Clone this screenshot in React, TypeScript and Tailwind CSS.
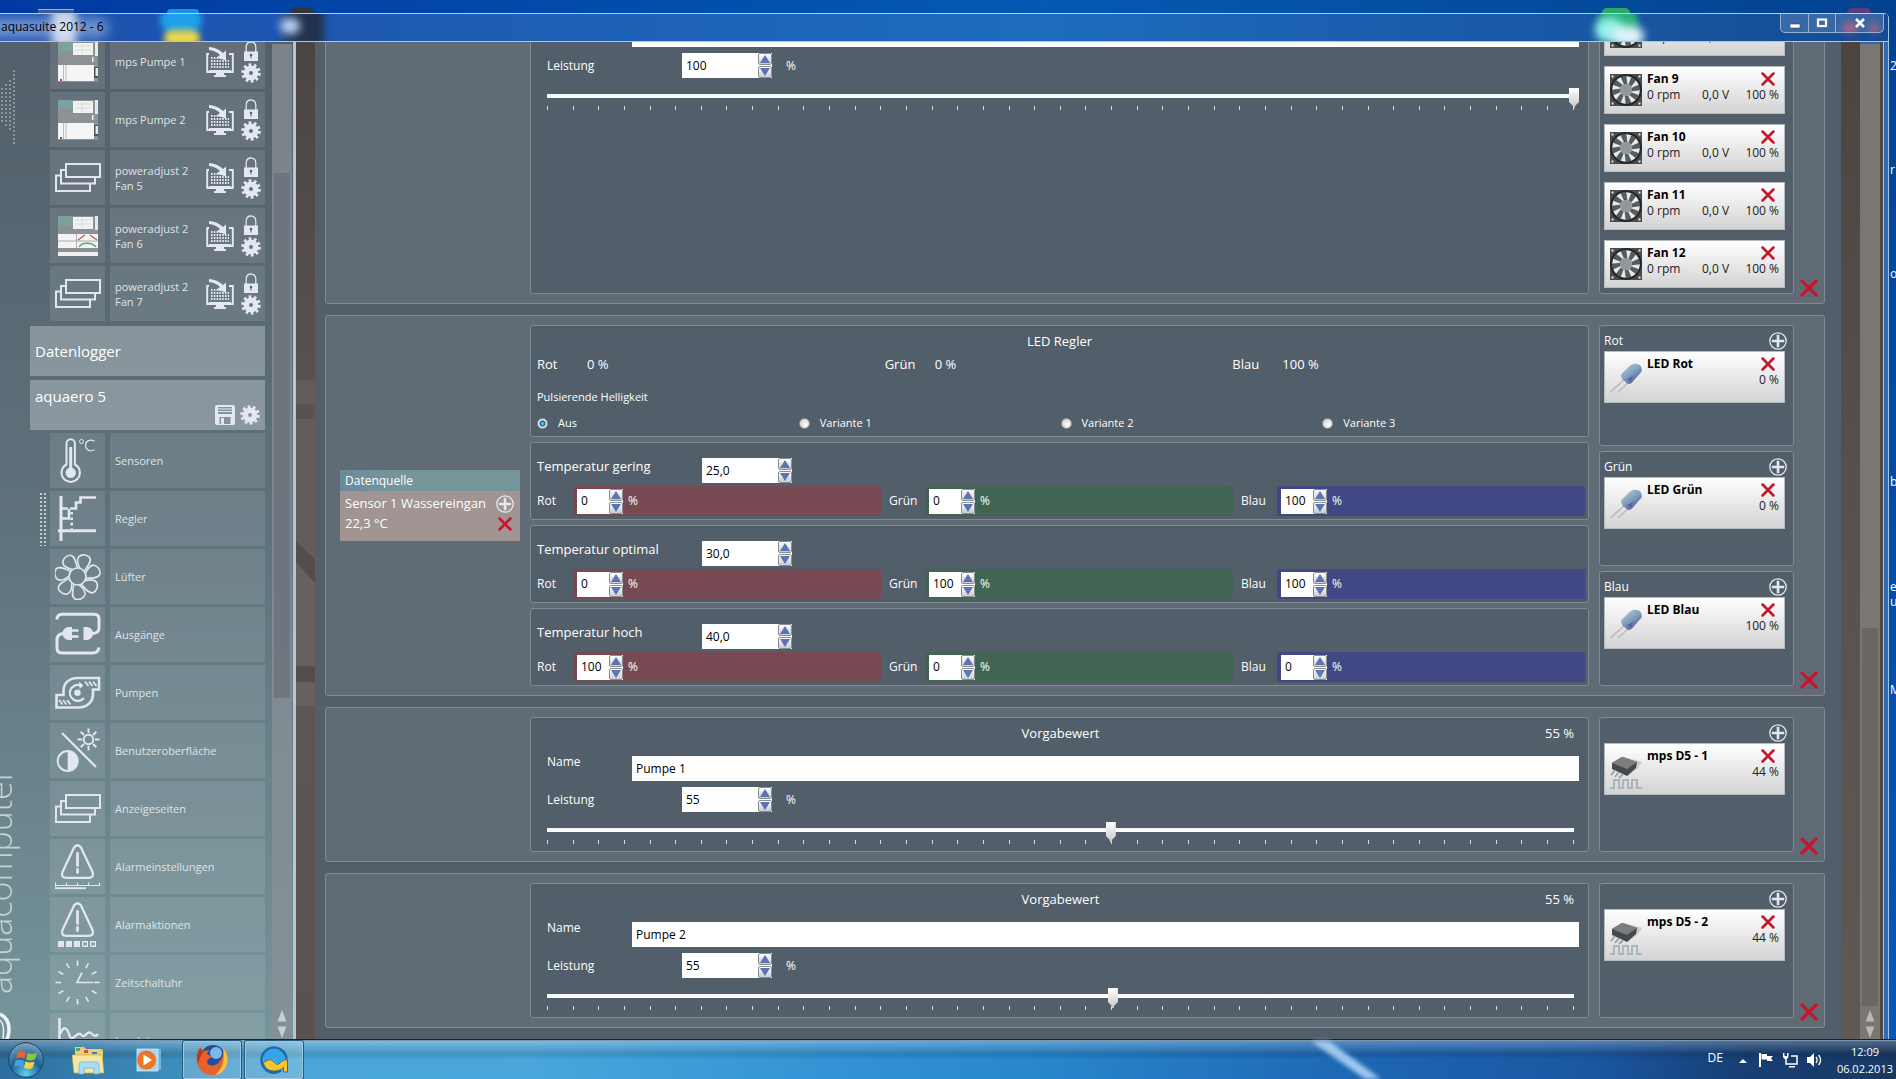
import React, { useId, useState } from "react";

/* ---------- small glyphs ---------- */

function Cross({ className }: { className: string }) {
  return (
    <svg viewBox="0 0 18 18" className={className} aria-hidden="true">
      <path d="M2 2 L16 16 M16 2 L2 16" stroke="#c3182e" strokeWidth="3.4" strokeLinecap="round" />
    </svg>
  );
}

function Plus() {
  return (
    <svg viewBox="0 0 18 18" className="size-[18px]" aria-hidden="true">
      <circle cx="9" cy="9" r="8.2" fill="none" stroke="#e3e8f2" strokeWidth="1.3" />
      <path d="M9 2.8 V15.2 M2.8 9 H15.2" stroke="#e3e8f2" strokeWidth="2.6" />
    </svg>
  );
}

function Gear() {
  return (
    <svg viewBox="0 0 20 20" className="size-5" aria-hidden="true">
      <g fill="none" stroke="#e3e8f2">
        <circle cx="10" cy="10" r="4.7" strokeWidth="5.4" />
        <circle cx="10" cy="10" r="8" strokeWidth="3.6" strokeDasharray="2.6 2.427" />
      </g>
    </svg>
  );
}

function Lock() {
  return (
    <svg viewBox="0 0 16 20" className="h-5 w-4" aria-hidden="true">
      <path d="M3.2 11 V6.2 C3.2 2.8 5.2 1 8 1 C10.800 1 12.800 2.800 12.800 6.200 V11" fill="none" stroke="#dfe5ee" strokeWidth="1.300" />
      <rect x="1" y="10.500" width="14" height="9.500" fill="#e3e8f2" />
      <circle cx="8" cy="14" r="1.300" fill="#56636d" />
      <path d="M8 14 V17.500" stroke="#56636d" />
    </svg>
  );
}

function MonitorImport() {
  return (
    <svg viewBox="0 0 28 32" className="h-8 w-7" aria-hidden="true">
      <path d="M3 8 H1.200 V26 H26.800 V8 H23" fill="none" stroke="#e3e8f2" strokeWidth="1.900" />
      <path d="M3 24.500 H25" stroke="#e3e8f2" strokeWidth="1" />
      <path d="M10 27 H18 V29 H20 V31 H8 V29 H10 Z" fill="#e3e8f2" />
      <path d="M5 12 H15 M5 15 H23 M5 18 H23 M5 21 H23" stroke="#e3e8f2" strokeWidth="1.800" strokeDasharray="1.600 1.200" />
      <path d="M3 1 C9 1.500 14 4 17 7 L20 4.500 V14.500 L10.500 11.500 L14 9 C11 5.800 7 4.300 3 4 Z" fill="#e3e8f2" />
    </svg>
  );
}

function Floppy() {
  return (
    <svg viewBox="0 0 20 20" className="size-5" aria-hidden="true">
      <rect x="0" y="0" width="20" height="20" rx="2" fill="#e3e8f2" />
      <rect x="3" y="2" width="14" height="7" fill="#879198" />
      <path d="M3 4 H17 M3 6.500 H17" stroke="#e3e8f2" />
      <rect x="4.500" y="12" width="11" height="7" fill="#879198" />
      <rect x="6" y="13" width="3" height="6" fill="#e3e8f2" />
    </svg>
  );
}

/* ---------- navigation icons, drawn on a 46 unit square ---------- */

function NavSvg({ children }: { children: React.ReactNode }) {
  return (
    <svg viewBox="0 0 46 46" className="size-[46px]" fill="none" stroke="#e1e6f0" strokeWidth="2" aria-hidden="true">
      {children}
    </svg>
  );
}

const StackIcon = () => (
  <NavSvg>
    <rect x="11" y="9" width="34" height="13" />
    <path d="M11 15 H6 V28.500 H40 V22 M6 20.500 H1 V36 H35 V29" />
  </NavSvg>
);

const ThermoIcon = () => (
  <NavSvg>
    <path d="M11.500 26.500 V5.500 A4.200 4.200 0 0 1 19.900 5.500 V26.500 A9.200 9.200 0 1 1 11.500 26.500 Z" />
    <circle cx="15.700" cy="34.700" r="5.200" fill="#e1e6f0" stroke="none" />
    <path d="M15.700 9 V34" strokeWidth="3" />
    <circle cx="26.500" cy="3.500" r="2" strokeWidth="1" />
    <path d="M39.500 3.200 C35 0.500 30.500 3 30.500 7.300 C30.500 12 35 14 39.500 11.800" strokeWidth="1.200" />
  </NavSvg>
);

const ReglerIcon = () => (
  <NavSvg>
    <path d="M6 0 V45 M3 34.700 H41" strokeWidth="3" />
    <path d="M41 1.500 H25.500 V6.500 H21 V12.500 H15 M14 13 V22.500 H6 M7 12.500 H13" strokeWidth="2.600" />
    <path d="M16.700 16 V33" strokeWidth="2.600" strokeDasharray="2.600 2.800" />
  </NavSvg>
);

const FanIcon = () => (
  <NavSvg>
    <circle cx="22.500" cy="22.500" r="8.500" strokeWidth="1.700" />
    {[0, 1, 2, 3, 4, 5, 6].map((i) => (
      <path
        key={i}
        transform={`rotate(${(i * 360) / 7} 22.500 22.500)`}
        d="M17.500 15.500 C13 14.500 8.500 12.500 7.800 9 C7.500 5 11.500 1 15.500 1.200 C20 2 20.500 8 22.500 14"
        strokeWidth="1.600"
      />
    ))}
  </NavSvg>
);

const PlugIcon = () => (
  <NavSvg>
    <path d="M2 7.500 Q2 2.200 7 2.200 H39 Q44 2.200 44 7 V16 Q44 21.500 37 21.500" strokeWidth="3" />
    <path d="M9 21.500 Q2 21.500 2 28 V36 Q2 41 7 41 H38 Q43 41 44 35.500" strokeWidth="3" />
    <path d="M17 15 V28 H14 C10 28 7.500 25 7.500 21.500 C7.500 18 10 15 14 15 Z" fill="#e1e6f0" stroke="none" />
    <path d="M28.500 15 V28 H31.500 C35.500 28 38 25 38 21.500 C38 18 35.500 15 31.500 15 Z" fill="#e1e6f0" stroke="none" />
    <path d="M17 18.500 H23.500 M17 24.500 H23.500" strokeWidth="2.400" />
  </NavSvg>
);

const PumpIcon = () => (
  <NavSvg>
    <path d="M44 8 H23 C13 8 8.500 14 8.500 21 V25 H1.500 V37.500 H23 C33 37.500 38 31 38 24 V19.500 H44 Z" strokeWidth="2.600" />
    <circle cx="22.500" cy="22.800" r="3.200" fill="#e1e6f0" stroke="none" />
    <path d="M29 28 A8 8 0 1 1 25 15.200" strokeWidth="2.200" />
    <path d="M24 11.500 L28.500 15.500 L24.500 19 Z" fill="#e1e6f0" stroke="none" />
    <path d="M30 11.500 L33.500 16 M34 11.500 L37.500 16 M38 11.500 L41.500 16 M4 30 L7.500 34.500 M8 30 L11.500 34.500 M12 30 L15.500 34.500" strokeWidth="1.900" />
  </NavSvg>
);

const DisplayIcon = () => (
  <NavSvg>
    <path d="M7 5 L41 39" strokeWidth="2.300" />
    <circle cx="33.500" cy="11.500" r="4.800" />
    <path d="M33.500 0.500 V5 M33.500 18 V22.500 M22.500 11.500 H27 M40 11.500 H44.500 M25.700 3.700 L29 7 M38 16 L41.300 19.300 M41.300 3.700 L38 7 M29 16 L25.700 19.300" />
    <circle cx="12.700" cy="33" r="10" />
    <path d="M12.700 23 A10 10 0 0 1 12.700 43 Z" fill="#e1e6f0" stroke="none" />
  </NavSvg>
);

const WarnShape = () => (
  <>
    <path d="M19 3.500 Q22.500 -1 26 3.500 L37.500 28 Q39.500 33.500 34 33.800 H11 Q5.500 33.500 7.500 28 Z" strokeWidth="2.300" />
    <path d="M22.500 9.500 V21.500 M22.500 25.500 V28.500" strokeWidth="2.800" strokeLinecap="round" />
  </>
);

const AlarmSettingsIcon = () => (
  <NavSvg>
    <WarnShape />
    <path d="M0 41.500 H45 M0.500 38.500 V43 M11.500 38.500 V42 M22.500 38.500 V42 M33.500 38.500 V42 M44.500 38.500 V42" strokeWidth="1.200" />
    <path d="M0 44.200 H31" strokeWidth="1.900" />
  </NavSvg>
);

const AlarmActionsIcon = () => (
  <NavSvg>
    <WarnShape />
    <path d="M3 42 H9 M11 42 H17 M19 42 H25" strokeWidth="6" />
    <path d="M27.700 39.700 H32.300 V44.300 H27.700 Z M35.700 39.700 H40.300 V44.300 H35.700 Z" strokeWidth="1.400" />
  </NavSvg>
);

const ClockIcon = () => (
  <NavSvg>
    {[0, 1, 2, 3, 4, 5, 6, 7, 8, 9, 10, 11].map((i) => (
      <path key={i} transform={`rotate(${i * 30} 22.500 22.500)`} d="M22.500 0.500 V6" strokeWidth="1.600" />
    ))}
    <path d="M38 22.500 H22 L27 12.500" strokeWidth="1.700" />
  </NavSvg>
);

const LogIcon = () => (
  <NavSvg>
    <path d="M4.500 0 V45 M1 40 H44" strokeWidth="2.600" />
    <path d="M5 16 C9 7 12 10 14 16 C15 19 16 21 18 20 C22 17 24 14 26.500 17 C30 21 32 12 36 15 C39 18 41 19 43 16" strokeWidth="2.400" />
  </NavSvg>
);

function Thumb({ alt }: { alt?: boolean }) {
  return (
    <svg viewBox="0 0 40 40" className="size-10" aria-hidden="true">
      <rect width="40" height="40" fill="#8b9194" />
      <rect width="15" height="9" fill="#7fa09f" />
      <rect x="15" y="1" width="20" height="12" fill="#f2f2f0" />
      <path d="M17 4 H33 M17 8 H33 M24 2 V12" stroke="#d5d4d0" strokeWidth="0.800" />
      <rect x="37" width="3" height="14" fill="#e8e8e8" />
      {alt ? (
        <>
          <rect y="18" width="40" height="14" fill="#f4f4f4" />
          <path d="M0 25 H40 M18.500 18 V32" stroke="#a9adae" />
          <path d="M20 24 L27 19 M32 19 L39 24" stroke="#c05a55" strokeWidth="1.300" />
          <path d="M21 31 C24 26 34 26 38 31" fill="none" stroke="#55a868" strokeWidth="1.400" />
          <rect y="36" width="40" height="4" fill="#f0eeee" />
        </>
      ) : (
        <>
          <rect y="23" width="36" height="16" fill="#f5f5f5" />
          <path d="M5.500 23 V39 M8 23 V39" stroke="#b9bcbd" />
          <rect x="36" y="25" width="4" height="11" fill="#4d5052" />
          <rect x="37.500" y="26" width="2.500" height="8" fill="#e6e6e6" />
          <rect x="2" y="37" width="2" height="2" fill="#b04040" />
          <rect x="34" y="15" width="1.500" height="5" fill="#f0f0f0" />
        </>
      )}
    </svg>
  );
}

/* ---------- device pictures ---------- */

function FanPicture() {
  const id = useId();
  return (
    <svg viewBox="0 0 32 32" className="size-8" aria-hidden="true">
      <defs>
        <radialGradient id={id}>
          <stop offset="0.300" stopColor="#8d9598" />
          <stop offset="1" stopColor="#23272a" />
        </radialGradient>
      </defs>
      <rect width="32" height="32" fill="#4a4b4c" />
      <circle cx="16" cy="16" r="15.500" fill="#17191b" />
      <circle cx="16" cy="16" r="13.800" fill="#e6eaea" />
      {[0, 1, 2, 3, 4, 5, 6, 7].map((i) => (
        <path key={i} transform={`rotate(${i * 45} 16 16)`} d="M14 10 L11 3.500 C12 2.500 14 2 16 2.200 L17 10 Z" fill="#565c60" stroke="#2b2f32" strokeWidth="0.400" />
      ))}
      <circle cx="16" cy="16" r="6.200" fill="#8f989c" />
      <circle cx="16" cy="16" r="15" fill="none" stroke={`url(#${id})`} strokeWidth="1.500" />
      <path d="M1.500 1.500 H3.500 V3.500 H1.500 Z M28.500 1.500 H30.500 V3.500 H28.500 Z M1.500 28.500 H3.500 V30.500 H1.500 Z M28.500 28.500 H30.500 V30.500 H28.500 Z" fill="#e8e8e8" />
    </svg>
  );
}

function LedPicture() {
  const id = useId();
  return (
    <svg viewBox="0 0 32 32" className="size-8" aria-hidden="true">
      <defs>
        <linearGradient id={id} x1="0" y1="0" x2="0.700" y2="1">
          <stop offset="0" stopColor="#b9d3dc" />
          <stop offset="0.550" stopColor="#7f9fbd" />
          <stop offset="1" stopColor="#55589a" />
        </linearGradient>
      </defs>
      <path d="M15 17 L0.500 30 M19 20 L8 30" stroke="#bcb9bd" strokeWidth="1.600" />
      <path d="M11.500 12 L20 3.500 C23 1 29 1 31 4.500 C32.500 8 32 10 29 12.500 L22.500 20 C20 23 17 22 15.500 20 C12 18 10.500 15 11.500 12 Z" fill={`url(#${id})`} />
      <path d="M17 17 L23 14 L21 20 Z" fill="#494d90" opacity="0.600" />
    </svg>
  );
}

function ChipPicture() {
  return (
    <svg viewBox="0 0 32 36" className="h-9 w-8" aria-hidden="true">
      <path d="M14 3 L32 8 L28 14 L18 22 L10 14 Z" fill="#b9bcbf" opacity="0.700" />
      <path d="M2 9 L12 3 L27 8 L26 14 L17 22 L2 15 Z" fill="#46484a" />
      <path d="M2 9 L12 3 L27 8 L17 15 Z" fill="#7b7e80" />
      <path d="M5 16 L1 21 M9 18 L5 23 M13 20 L9 24" stroke="#9aa3aa" strokeWidth="2" />
      <path d="M0 34 H4 V26 H9 V34 H13 V26 H18 V34 H22 V26 H27 V34 H32" fill="none" stroke="#a9b7bf" strokeWidth="2" />
    </svg>
  );
}

/* ---------- form parts ---------- */

function Spinner({ value, label, className }: { value: string; label: string; className: string }) {
  const [text, setText] = useState(value);
  const step = (d: number) => {
    const n = parseFloat(text.replace(",", ".")) + d;
    if (!Number.isNaN(n)) setText(value.includes(",") ? n.toFixed(1).replace(".", ",") : String(n));
  };
  const btn =
    "flex h-3 w-3.5 items-center justify-center rounded-[2px] border border-[#8c8c8c] bg-linear-to-b from-white to-[#c9ccd2]";
  return (
    <div className={"flex h-[25px] bg-white text-black " + className}>
      <input
        aria-label={label}
        value={text}
        onChange={(e) => setText(e.target.value)}
        className="min-w-0 flex-1 bg-transparent pl-1 text-xs outline-none"
      />
      <div className="flex flex-col justify-between">
        <button type="button" aria-label={label + " erhöhen"} className={btn} onClick={() => step(1)}>
          <svg viewBox="0 0 10 8" className="h-2 w-2.5" aria-hidden="true">
            <path d="M5 0 L10 8 H0 Z" fill="#5b74b4" />
          </svg>
        </button>
        <button type="button" aria-label={label + " verringern"} className={btn} onClick={() => step(-1)}>
          <svg viewBox="0 0 10 8" className="h-2 w-2.5" aria-hidden="true">
            <path d="M5 8 L10 0 H0 Z" fill="#5b74b4" />
          </svg>
        </button>
      </div>
    </div>
  );
}

function Panel({ className, children }: { className: string; children: React.ReactNode }) {
  return <div className={"rounded-[3px] border border-[#7e8b95] bg-[#525e69] " + className}>{children}</div>;
}

function Group({ source, middle, outputs }: { source?: React.ReactNode; middle: React.ReactNode; outputs: React.ReactNode }) {
  return (
    <section className="flex shrink-0 rounded-[3px] border border-[#7e8b95] bg-[#616b75]">
      <div className="flex w-[204px] shrink-0 items-center pl-3.5">{source}</div>
      <div className="my-[9px] flex min-w-0 flex-1 flex-col gap-[5px]">{middle}</div>
      <div className="my-[9px] ml-2.5 flex w-[195px] shrink-0 flex-col gap-[5px]">{outputs}</div>
      <div className="flex w-[30px] shrink-0 items-end justify-center pb-1.5">
        <button type="button" aria-label="Regler löschen">
          <Cross className="size-[18px]" />
        </button>
      </div>
    </section>
  );
}

function Setpoint({ name, value, position, tall }: { name: string; value: string; position: number; tall?: boolean }) {
  const id = useId();
  return (
    <Panel className={tall ? "h-[311px] pt-1.5 pr-3.5 pb-[7px] pl-4" : "pt-1.5 pr-3.5 pb-[7px] pl-4"}>
      <div className="grid h-5 grid-cols-3 items-center text-[13px]">
        <h2 className="col-start-2 text-center">Vorgabewert</h2>
        <span className="text-right">{value} %</span>
      </div>
      <div className="mt-3 -mr-[5px] flex">
        <label htmlFor={id + "n"} className="w-[85px] text-xs leading-3">
          Name
        </label>
        <input id={id + "n"} defaultValue={name} className="h-[25px] min-w-0 flex-1 bg-white px-1 text-xs text-black outline-none" />
      </div>
      <div className="mt-1.5 flex items-center text-xs">
        <span className="w-[135px]">Leistung</span>
        <Spinner value={value} label="Leistung" className="w-[90px]" />
        <span className="ml-3.5">%</span>
      </div>
      <input
        type="range"
        aria-label="Leistung in Prozent"
        defaultValue={position}
        step="0.1"
        className="mt-2.5 -ml-[5px] block h-5 w-[calc(100%+10px)] appearance-none bg-[linear-gradient(#f4f6f8,#ffffff)] bg-[length:calc(100%-10px)_4px] bg-[position:center_6px] bg-no-repeat outline-none [&::-webkit-slider-thumb]:h-5 [&::-webkit-slider-thumb]:w-2.5 [&::-webkit-slider-thumb]:appearance-none [&::-webkit-slider-thumb]:bg-linear-to-b [&::-webkit-slider-thumb]:from-white [&::-webkit-slider-thumb]:to-[#c8c8c8] [&::-webkit-slider-thumb]:[clip-path:polygon(0_0,100%_0,100%_70%,60%_90%,60%_100%,40%_100%,40%_90%,0_70%)]"
      />
      <div className="-mt-0.5 flex h-1 justify-between" aria-hidden="true">
        {Array.from({ length: 41 }, (_, i) => (
          <span key={i} className="w-px bg-[#d5dbe0]" />
        ))}
      </div>
    </Panel>
  );
}

function Card({ name, value, tall, children, readings }: { name: string; value: string; tall?: boolean; children: React.ReactNode; readings?: [string, string] }) {
  return (
    <article
      className={
        (tall ? "h-[52px] " : "h-12 ") +
        "flex shrink-0 border border-[#b4bcc2] bg-linear-to-b from-white to-[#d3d3d3] text-black"
      }
    >
      <div className={tall ? "flex w-[42px] shrink-0 justify-center pt-2.5" : "flex w-[42px] shrink-0 justify-center pt-[7px]"}>{children}</div>
      <div className="min-w-0 flex-1 pt-1 pr-[5px]">
        <div className="flex h-4 items-center justify-between pr-1">
          <h3 className="text-xs font-bold">{name}</h3>
          <button type="button" aria-label={name + " entfernen"}>
            <Cross className="size-3.5" />
          </button>
        </div>
        <div className="flex h-4 items-center text-xs whitespace-nowrap text-[#222]">
          {readings && (
            <>
              <span className="w-[55px]">{readings[0]}</span>
              <span>{readings[1]}</span>
            </>
          )}
          <span className="ml-auto">{value}</span>
        </div>
      </div>
    </article>
  );
}

function Output({ label, name, value, className, children }: { label?: string; name: string; value: string; className: string; children: React.ReactNode }) {
  return (
    <Panel className={"px-1 pt-1.5 " + className}>
      <div className="flex h-[18px] items-center justify-between pr-0.5 text-xs">
        <span>{label}</span>
        <button type="button" aria-label="Ausgang hinzufügen">
          <Plus />
        </button>
      </div>
      <div className="mt-px w-[181px]">
        <Card name={name} value={value} tall>
          {children}
        </Card>
      </div>
    </Panel>
  );
}

function Channel({ label, value, bar }: { label: string; value: string; bar: string }) {
  return (
    <div className="flex items-center pr-0.5 text-xs">
      <span className="w-[42px] shrink-0 pl-1.5">{label}</span>
      <div className={"flex h-[30px] flex-1 items-center rounded-[2px] pl-1 " + bar}>
        <Spinner value={value} label={label} className="w-[46px]" />
        <span className="ml-[5px]">%</span>
      </div>
    </div>
  );
}

function TemperatureStep({ title, temp, rgb }: { title: string; temp: string; rgb: [string, string, string] }) {
  return (
    <Panel className="h-[78px] pt-[15px]">
      <div className="flex pl-1.5">
        <h3 className="w-[165px] text-[13px] leading-4">{title}</h3>
        <Spinner value={temp} label={title} className="w-[90px]" />
      </div>
      <div className="mt-[3px] grid grid-cols-3 pr-px">
        <Channel label="Rot" value={rgb[0]} bar="bg-[#774a53]" />
        <Channel label="Grün" value={rgb[1]} bar="bg-[#426453]" />
        <Channel label="Blau" value={rgb[2]} bar="bg-[#424884]" />
      </div>
    </Panel>
  );
}

function LedHead() {
  const id = useId();
  const readings = [
    ["Rot", "0 %"],
    ["Grün", "0 %"],
    ["Blau", "100 %"],
  ];
  return (
    <Panel className="h-28 pt-1.5 pl-1.5">
      <h2 className="pr-1.5 text-center text-[13px] leading-[18px]">LED Regler</h2>
      <div className="mt-[5px] grid grid-cols-3 pr-2 text-[13px] leading-[18px]">
        {readings.map(([k, v]) => (
          <div key={k} className="flex">
            <span className="w-[50px]">{k}</span>
            <span>{v}</span>
          </div>
        ))}
      </div>
      <div role="radiogroup" aria-labelledby={id} className="mt-4 text-[11px] leading-4">
        <p id={id}>Pulsierende Helligkeit</p>
        <div className="mt-2.5 grid grid-cols-4 pr-1">
          {["Aus", "Variante 1", "Variante 2", "Variante 3"].map((v, i) => (
            <label key={v} className="flex items-center">
              <input
                type="radio"
                name="puls"
                defaultChecked={i === 0}
                className="mr-2.5 size-[11px] appearance-none rounded-full border border-[#8f9499] bg-[radial-gradient(circle_at_60%_60%,#ffffff,#c4c4c4)] checked:bg-[radial-gradient(circle,#49c0e8_15%,#1c5a80_42%,#e8eef2_55%)]"
              />
              {v}
            </label>
          ))}
        </div>
      </div>
    </Panel>
  );
}

/* ---------- sidebar ---------- */

const devices = [
  { name: "mps Pumpe 1", icon: <Thumb /> },
  { name: "mps Pumpe 2", icon: <Thumb /> },
  { name: "poweradjust 2\nFan 5", icon: <StackIcon /> },
  { name: "poweradjust 2\nFan 6", icon: <Thumb alt /> },
  { name: "poweradjust 2\nFan 7", icon: <StackIcon /> },
];

const pages = [
  { name: "Sensoren", icon: <ThermoIcon /> },
  { name: "Regler", icon: <ReglerIcon /> },
  { name: "Lüfter", icon: <FanIcon /> },
  { name: "Ausgänge", icon: <PlugIcon /> },
  { name: "Pumpen", icon: <PumpIcon /> },
  { name: "Benutzeroberfläche", icon: <DisplayIcon /> },
  { name: "Anzeigeseiten", icon: <StackIcon /> },
  { name: "Alarmeinstellungen", icon: <AlarmSettingsIcon /> },
  { name: "Alarmaktionen", icon: <AlarmActionsIcon /> },
  { name: "Zeitschaltuhr", icon: <ClockIcon /> },
  { name: "Logdaten", icon: <LogIcon /> },
];

function NavRow({ icon, name, tools, active }: { icon: React.ReactNode; name: string; tools?: boolean; active?: boolean }) {
  return (
    <li className="flex h-[55px] shrink-0">
      <div className="flex w-5 items-center justify-end pr-[3px]">
        {active && <div className="h-[54px] w-2 bg-[radial-gradient(circle,#c3ccd2_1px,transparent_1px)] bg-[length:4px_4px]" />}
      </div>
      <div className="flex w-[55px] items-center justify-center bg-white/10">{icon}</div>
      <div className="ml-[5px] flex w-[155px] items-center bg-white/10 pr-1">
        <a href="#" className="flex-1 pl-[5px] text-[11px] leading-[15px] whitespace-pre text-[#dfe4e6]">
          {name}
        </a>
        {tools && (
          <div className="flex items-center gap-[7px]">
            <button type="button" aria-label="Anzeigen">
              <MonitorImport />
            </button>
            <div className="flex flex-col items-center gap-0.5">
              <button type="button" aria-label="Sperren">
                <Lock />
              </button>
              <button type="button" aria-label="Einstellungen">
                <Gear />
              </button>
            </div>
          </div>
        )}
      </div>
    </li>
  );
}

function ScrollArrows({ color }: { color: string }) {
  return (
    <svg viewBox="0 0 10 28" className="h-7 w-2.5" fill={color} aria-hidden="true">
      <path d="M5 0 L9.500 11.500 H0.500 Z M5 28 L9.500 16.500 H0.500 Z" />
    </svg>
  );
}

function Sidebar() {
  return (
    <aside className="flex w-[296px] shrink-0 overflow-hidden border-r-[3px] border-[#b9c6d0] bg-linear-to-b from-[#535f6a] via-[#5f737d] via-50% to-[#76959b]">
      <div className="flex h-full w-[30px] shrink-0 flex-col justify-between pt-7">
        <svg viewBox="0 0 16 74" className="h-[74px] w-4" aria-hidden="true">
          <path d="M14 0 V74" stroke="#8b969d" strokeWidth="2" strokeDasharray="2 2" />
          <path d="M10 10 V62" stroke="#8b969d" strokeWidth="2" strokeDasharray="2 2" />
          <path d="M6 14 V58" stroke="#8b969d" strokeWidth="2" strokeDasharray="2 2" />
          <path d="M2 18 V54" stroke="#8b969d" strokeWidth="2" strokeDasharray="2 2" />
        </svg>
        <div className="flex flex-col items-start gap-[18px]">
          <span className="-ml-6 rotate-180 text-[34px] leading-[46px] font-light whitespace-nowrap text-[#c5d1d4] [writing-mode:vertical-rl]">aquacomputer</span>
          <svg viewBox="0 0 12 28" className="h-7 w-3" fill="none" stroke="#f1f4f5" aria-hidden="true">
            <path d="M0 2 C6 5 9 11 9 17 C9 22 8 26 6 28" strokeWidth="3.500" />
            <path d="M0 8 C4 12 4 18 3 28" strokeWidth="1.500" />
          </svg>
        </div>
      </div>
      <nav className="-mt-2 flex w-[235px] shrink-0 flex-col">
        <ul className="flex flex-col gap-[3px]">
          {devices.map((d) => (
            <NavRow key={d.name} icon={d.icon} name={d.name} tools />
          ))}
        </ul>
        <a href="#" className="mt-[5px] flex h-[50px] shrink-0 items-center bg-white/28 pl-[5px] text-[15px]">
          Datenlogger
        </a>
        <div className="mt-1 mb-[3px] flex h-[50px] shrink-0 bg-white/28 pr-[5px] pl-[5px]">
          <a href="#" className="flex-1 pt-1.5 text-[15px] leading-5">
            aquaero 5
          </a>
          <div className="flex items-end gap-[5px] pb-[5px]">
            <button type="button" aria-label="Speichern">
              <Floppy />
            </button>
            <button type="button" aria-label="Einstellungen">
              <Gear />
            </button>
          </div>
        </div>
        <ul className="flex flex-col gap-[3px]">
          {pages.map((p) => (
            <NavRow key={p.name} icon={p.icon} name={p.name} active={p.name === "Regler"} />
          ))}
        </ul>
      </nav>
      <div className="mt-0.5 ml-[7px] flex w-5 flex-col items-center bg-[#8a8f96]/75 pb-0.5">
        <div className="grow-[129] basis-0" />
        <div className="w-4 grow-[525] basis-0 bg-[#6a7079]/80" />
        <div className="grow-[312] basis-0" />
        <ScrollArrows color="#c6cfd2" />
      </div>
    </aside>
  );
}

/* ---------- taskbar ---------- */

function Taskbar() {
  return (
    <footer className="relative z-10 flex h-[39px] shrink-0 border-t border-[#7d96ad] bg-[linear-gradient(to_bottom,rgba(255,255,255,0.250),rgba(0,0,0,0.120)_35%,transparent_50%),linear-gradient(to_right,#2b6d9c,#4aa6d6_16%,#49a7dc_28%,#3595d6_42%,#2886cb_55%,#1d66b3_72%,#1a57a2_84%,#173f73_92%,#183862)] shadow-[0_-1px_0_#16222e]">
      <svg viewBox="0 0 90 38" className="absolute top-0 left-[1305px] h-[38px] w-[90px] blur-[2px]" aria-hidden="true">
        <path d="M6 0 H24 L76 38 H60 Z" fill="#b4d8fa" opacity="0.850" />
      </svg>
      <button type="button" aria-label="Start" className="ml-2 flex w-9 items-center">
        <svg viewBox="0 0 36 36" className="size-9" aria-hidden="true">
          <defs>
            <radialGradient id="orb" cx="0.500" cy="0.900" r="0.900">
              <stop offset="0" stopColor="#5fd0f2" />
              <stop offset="0.500" stopColor="#1d6296" />
              <stop offset="1" stopColor="#83a6bf" />
            </radialGradient>
          </defs>
          <circle cx="18" cy="18" r="17.300" fill="url(#orb)" stroke="#1b4263" />
          <path d="M10 10 C13 8.500 15.500 9 18 10.500 L16.500 17 C14 15.500 11.500 15 8 16.500 Z" fill="#e8642c" />
          <path d="M19.500 11 C22 12 25 12.500 29 11 L27 17.500 C24 19 21 18.500 18 17.500 Z" fill="#8cc63f" />
          <path d="M7.500 18.500 C10.500 17.200 13.500 17.500 16 19 L14.500 25 C12 23.500 9 23.500 6 24.700 Z" fill="#4aa3e0" />
          <path d="M17.500 19.500 C20 20.500 23 21 26.500 19.500 L24.500 26 C21.500 27.500 18.500 27 16 25.800 Z" fill="#fdd33c" />
        </svg>
      </button>
      <button type="button" aria-label="Explorer" className="ml-7 flex w-8 items-center">
        <svg viewBox="0 0 32 30" className="h-[30px] w-8" aria-hidden="true">
          <path d="M3 2 H12 L14 4 H29 Q31 4 31 6 V27 H3 Z" fill="#e9cf77" />
          <path d="M4 3 H8 V6 H4 Z" fill="#4caf50" />
          <path d="M12 5 H16 V8 H12 Z" fill="#d8503a" />
          <path d="M20 7 H25 V9 H20 Z" fill="#3c7fd0" />
          <path d="M0 10 H30 L32 28 H2 Z" fill="#f7e6a2" stroke="#c9a94a" strokeWidth="0.700" />
          <path d="M7 29 V20 Q7 17 10 17 H24 Q27 17 27 20 V29 H22 V23 H12 V29 Z" fill="#a9def2" stroke="#6cb5d6" strokeWidth="0.800" />
        </svg>
      </button>
      <button type="button" aria-label="Media Player" className="ml-8 flex w-[26px] items-center">
        <svg viewBox="0 0 26 24" className="h-6 w-[26px]" aria-hidden="true">
          <rect x="18" y="1" width="7" height="21" fill="#8fc4e4" opacity="0.700" />
          <rect x="1" y="1" width="21" height="22" fill="#a8d4ee" stroke="#d5ecf8" strokeWidth="0.800" />
          <circle cx="10.500" cy="12" r="9.500" fill="#ee7623" />
          <path d="M7.500 6.500 L16 12 L7.500 17.500 Z" fill="#fff" />
        </svg>
      </button>
      <button type="button" aria-label="Firefox" className="ml-[21px] flex w-[58px] items-center justify-center rounded-[2px] border border-[#9cc8e2] bg-white/20 ring-1 ring-[#275a7c]">
        <svg viewBox="0 0 32 32" className="size-8" aria-hidden="true">
          <circle cx="17" cy="13.500" r="12.500" fill="#1f4f9c" />
          <circle cx="20" cy="9" r="6" fill="#7db9e8" />
          <path d="M27 4 C33 10 33 21 27 27 C20 33 9 32 4 25 C-1 18 0 9 4.500 3.500 C5 6 6 7 8 7 C10 6 12 6 13.500 6.500 C11 8.500 10.500 10 12 11 L15.500 12 C15 14 13 14.500 12 15.500 C10 18 12 21.500 16 21.500 C19 21.500 22 20 24 17 C27 13 28 9 27 4 Z" fill="#e6622a" />
          <path d="M27 4 C33 10 33 21 27 27 C25 29 22 30.500 19 31 C27 25 29 15 27 4 Z" fill="#f9c23c" />
          <path d="M4.500 3.500 C1 8 0 14 2 20 C4 14 5 10 8 7 C6 7 5 6 4.500 3.500 Z" fill="#b8391c" />
        </svg>
      </button>
      <button type="button" aria-label="aquasuite" className="ml-1 flex w-[58px] items-center justify-center rounded-[2px] border border-[#9cc8e2] bg-white/20 ring-1 ring-[#275a7c]">
        <svg viewBox="0 0 30 30" className="size-[30px]" aria-hidden="true">
          <path d="M22 25.500 A12.500 12.500 0 1 1 27.500 14" fill="none" stroke="#1a6cb0" strokeWidth="2.600" />
          <path d="M4.500 15 A10.500 10.500 0 0 1 25.500 13.500 C23 14.500 21.500 16.500 20.500 18 C19 19 17.500 17.500 15.500 15.500 C12 12.500 8 15 4.500 17 Z" fill="#35a5e5" />
          <path d="M4.500 17.500 C8 15.500 11 13.500 14 16 C16.500 18.500 18 21 21 18 C23 15.500 25 14.500 28.500 15 V27 H24.500 V22.500 C20 27 11 27.500 6.500 22.500 C5 20.500 4.500 19 4.500 17.500 Z" fill="#f7c52c" stroke="#24537c" strokeWidth="0.800" />
        </svg>
      </button>
      <div className="ml-auto flex items-center text-xs">
        <span className="mb-1">DE</span>
        <svg viewBox="0 0 90 20" className="ml-4 h-5 w-[90px]" fill="#fff" aria-hidden="true">
          <path d="M0 13 L4 9 L8 13 Z" />
          <path d="M20 3 H22 V17 H20 Z M22.500 4 H28 V6 H34 L32 8.500 L34 11 H28 V9.500 H22.500 Z" />
          <path d="M52 6 H58 V14 H47 V9" fill="none" stroke="#fff" strokeWidth="1.500" />
          <path d="M50 16 H56 V17.500 H50 Z M44 3 H45.500 V6 H48 V3 H49.500 V7 L48 9 H45.500 L44 7 Z" />
          <path d="M68 7 H71 L75 3 V17 L71 13 H68 Z" />
          <path d="M77 7 C78.500 9 78.500 11 77 13 M79.500 5 C82 8 82 12 79.500 15" fill="none" stroke="#fff" strokeWidth="1.300" />
        </svg>
        <div className="mr-[3px] ml-2 text-center text-[11px] leading-[17px]">
          <time className="block">12:09</time>
          <time className="block">06.02.2013</time>
        </div>
      </div>
    </footer>
  );
}

/* ---------- window frame ---------- */

function TitleBar() {
  return (
    <header className="relative flex h-[29px] shrink-0 items-start justify-between overflow-hidden border-t border-b border-t-[#b5cde6] border-b-[#a9c6e2] bg-linear-to-r from-[#1d4fae] via-[#1e6cbd] via-55% to-[#154b94]">
      <div className="absolute top-1 -left-4 h-5 w-[125px] rounded-full bg-[#a9bfe6]/60 blur-[6px]" />
      <div className="absolute -top-2 left-[52px] h-12 w-6 bg-white/70 blur-[4px]" />
      <div className="absolute -top-2 left-[160px] h-7 w-[42px] rounded-full bg-[#1fa0ea] blur-[3px]" />
      <div className="absolute top-4 left-[164px] h-4 w-9 rounded-full bg-[#ecd84c] blur-[3px]" />
      <div className="absolute -top-2 left-[284px] h-10 w-10 bg-[#20324c] blur-[4px]" />
      <div className="absolute top-1 left-[280px] h-4 w-5 rounded-full bg-[#b9d2fa] blur-[4px]" />
      <div className="absolute -top-2 left-[1598px] h-8 w-10 rounded-full bg-[#27b27a] blur-[3px]" />
      <div className="absolute top-1 left-[1595px] h-6 w-7 rounded-full bg-[#9af0ee] blur-[4px]" />
      <div className="absolute top-3 left-[1612px] h-5 w-8 rounded-full bg-[#dff5fb] blur-[4px]" />
      <div className="absolute top-2 left-[1842px] h-3 w-4 rounded-full bg-[#b04668]/80 blur-[3px]" />
      <div className="absolute top-2 left-[1868px] h-3 w-3 rounded-full bg-[#b04668]/60 blur-[3px]" />
      <h1 className="relative pl-px text-xs leading-[26px] text-black">aquasuite 2012 - 6</h1>
      <div className="relative mr-1 flex h-[19px] rounded-b-[5px] border border-t-0 border-[#8fb0d4] bg-white/15">
        <button type="button" aria-label="Minimieren" className="flex w-[28px] items-center justify-center border-r border-[#8fb0d4]">
          <svg viewBox="0 0 12 12" className="size-3" aria-hidden="true">
            <rect x="1" y="7" width="10" height="4" fill="#fff" stroke="#445" strokeWidth="0.600" />
          </svg>
        </button>
        <button type="button" aria-label="Maximieren" className="flex w-[27px] items-center justify-center border-r border-[#8fb0d4]">
          <svg viewBox="0 0 12 12" className="size-3" aria-hidden="true">
            <rect x="2" y="2.500" width="8" height="6.500" fill="none" stroke="#fff" strokeWidth="2.200" />
          </svg>
        </button>
        <button type="button" aria-label="Schließen" className="flex w-[47px] items-center justify-center">
          <svg viewBox="0 0 12 12" className="size-3" aria-hidden="true">
            <path d="M2 2 L10 10 M10 2 L2 10" stroke="#fff" strokeWidth="2.600" />
          </svg>
        </button>
      </div>
    </header>
  );
}

function DesktopLabel({ text, className }: { text: string; className: string }) {
  return <span className={"absolute left-px text-xs leading-4 whitespace-nowrap text-white " + className}>{text}</span>;
}

export default function App() {
  return (
    <div className="flex h-screen flex-col overflow-hidden bg-[#0448a4] font-['Open_Sans','Noto_Sans',sans-serif] text-white">
      <div className="relative h-[13px] shrink-0 bg-linear-to-r from-[#0239a0] via-[#0459b4] via-55% to-[#03428f]">
        <div className="absolute top-[9px] left-[38px] h-1 w-9 border-t border-[#9fb6dc] bg-[#3c5a90]" />
        <div className="absolute top-[9px] left-[167px] h-1 w-8 rounded-t-full bg-[#1c93dc]" />
        <div className="absolute top-2 left-[290px] h-[5px] w-6 rounded-t-full bg-[#30353c]" />
        <div className="absolute top-2 left-[1602px] h-[5px] w-7 rounded-t-full bg-[#2aa868]" />
        <div className="absolute top-2 left-[1847px] h-[5px] w-6 rounded-t-full bg-[#5a3c80]" />
      </div>
      <div className="flex min-h-0 flex-1">
        <div className="flex min-w-0 flex-1 flex-col overflow-hidden rounded-tr-[5px] border-r border-[#a4c4e2] shadow-[0_-1px_0_#10223c]">
          <TitleBar />
          <div className="flex min-h-0 flex-1 bg-linear-to-r from-[#1a57a8] to-[#2d6bb5]">
            <div className="mr-1 flex min-w-0 flex-1 border-r border-[#a4c4e2]">
              <Sidebar />
              <svg viewBox="0 0 19 998" preserveAspectRatio="none" className="h-full w-[19px] shrink-0" aria-hidden="true">
                <defs>
                  <linearGradient id="wood" x1="0" y1="0" x2="0" y2="1">
                    <stop offset="0" stopColor="#4b4542" />
                    <stop offset="0.500" stopColor="#5f5754" />
                    <stop offset="1" stopColor="#5a5250" />
                  </linearGradient>
                </defs>
                <rect width="19" height="998" fill="url(#wood)" />
                <path d="M0 338 H19 V362 H0 Z M0 377 H19 V517 L0 499 Z" fill="#645c58" />
                <path d="M0 520 L19 541 V624 H0 Z M0 640 H19 V664 H0 Z" fill="#68605c" />
                <path d="M0 499 L19 517 V541 L0 520 Z M0 624 H19 V640 H0 Z" fill="#544d4a" />
              </svg>
              <main className="flex min-w-0 flex-1 flex-col justify-end gap-[11px] bg-[#525e69] pr-4 pb-3 pl-2.5">
                <Group
                  middle={<Setpoint name="Lüfter" value="100" position={100} tall />}
                  outputs={
                    <Panel className="flex h-[311px] flex-col justify-end gap-2.5 overflow-hidden pr-2 pb-[5px] pl-1">
                      {["Fan 8", "Fan 9", "Fan 10", "Fan 11", "Fan 12"].map((f) => (
                        <Card key={f} name={f} value="100 %" readings={["0 rpm", "0,0 V"]}>
                          <FanPicture />
                        </Card>
                      ))}
                    </Panel>
                  }
                />
                <Group
                  source={
                    <div className="w-[180px]">
                      <h3 className="h-[21px] bg-linear-to-r from-[#6a8a9c] to-[#76959a] to-30% pl-[5px] text-xs leading-[22px]">Datenquelle</h3>
                      <div className="flex h-[50px] bg-[#a19492] pr-1.5 pl-[5px]">
                        <div className="min-w-0 flex-1 pt-0.5 text-[13px] leading-5">
                          <p className="overflow-hidden whitespace-nowrap">Sensor 1 Wassereingan</p>
                          <p>22,3 °C</p>
                        </div>
                        <div className="flex flex-col items-center gap-1 pt-1">
                          <button type="button" aria-label="Datenquelle wählen" className="block">
                            <Plus />
                          </button>
                          <button type="button" aria-label="Datenquelle entfernen">
                            <Cross className="size-3.5" />
                          </button>
                        </div>
                      </div>
                    </div>
                  }
                  middle={
                    <>
                      <LedHead />
                      <TemperatureStep title="Temperatur gering" temp="25,0" rgb={["0", "0", "100"]} />
                      <TemperatureStep title="Temperatur optimal" temp="30,0" rgb={["0", "100", "100"]} />
                      <TemperatureStep title="Temperatur hoch" temp="40,0" rgb={["100", "0", "0"]} />
                    </>
                  }
                  outputs={
                    <>
                      <Output label="Rot" name="LED Rot" value="0 %" className="h-[121px]">
                        <LedPicture />
                      </Output>
                      <Output label="Grün" name="LED Grün" value="0 %" className="h-[115px]">
                        <LedPicture />
                      </Output>
                      <Output label="Blau" name="LED Blau" value="100 %" className="h-[115px]">
                        <LedPicture />
                      </Output>
                    </>
                  }
                />
                {["1", "2"].map((n) => (
                  <Group
                    key={n}
                    middle={<Setpoint name={"Pumpe " + n} value="55" position={n === "1" ? 54.9 : 55.1} />}
                    outputs={
                      <Output name={"mps D5 - " + n} value="44 %" className="flex-1">
                        <ChipPicture />
                      </Output>
                    }
                  />
                ))}
              </main>
              <div className="w-[19px] shrink-0 bg-linear-to-b from-[#4b4542] via-[#575250] to-[#5f5855]" />
              <div className="mt-0.5 flex w-5 shrink-0 flex-col items-center bg-[#7a7673] pb-0.5">
                <div className="grow-[584] basis-0" />
                <div className="w-4 grow-[378] basis-0 bg-[#6a6664]" />
                <div className="h-1" />
                <ScrollArrows color="#b8b6b6" />
              </div>
              <div className="w-[3px] shrink-0 bg-[#4f4946]" />
            </div>
          </div>
        </div>
        <div className="relative w-[7px] shrink-0 overflow-hidden bg-linear-to-b from-[#03428f] to-[#0a55b8]">
          <DesktopLabel text="2" className="top-[45px]" />
          <DesktopLabel text="r I" className="top-[149px]" />
          <DesktopLabel text="ol" className="top-[253px]" />
          <DesktopLabel text="b" className="top-[461px]" />
          <DesktopLabel text="er" className="top-[566px]" />
          <DesktopLabel text="ue" className="top-[581px]" />
          <DesktopLabel text="M" className="top-[669px]" />
        </div>
      </div>
      <Taskbar />
    </div>
  );
}
